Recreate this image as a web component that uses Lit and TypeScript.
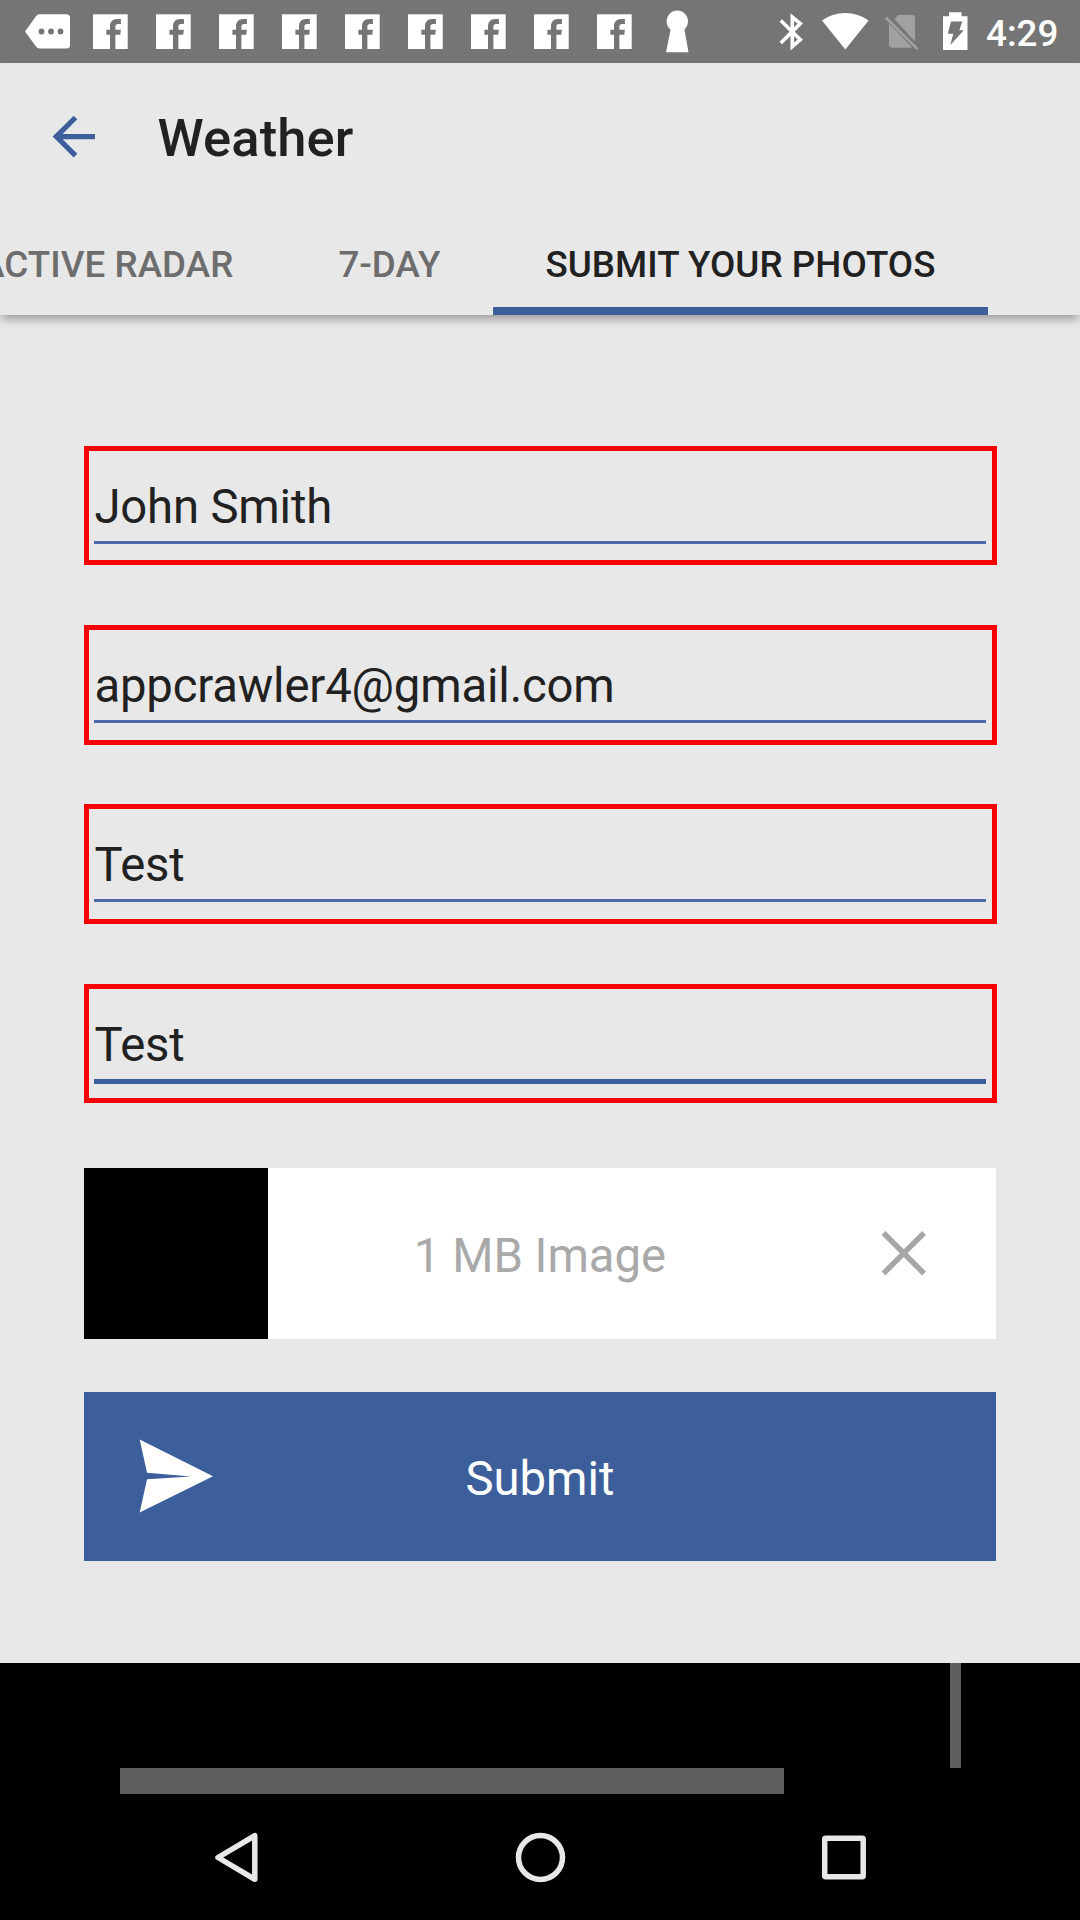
import { LitElement, html, css } from "lit";
import { customElement, property } from "lit/decorators.js";
import { classMap } from "lit/directives/class-map.js";

@customElement("status-bar")
class StatusBar extends LitElement {
  static styles = css`
    :host {
      display: flex;
      height: 63px;
      padding-left: 16px;
      background: #757575;
      color: #fff;
      overflow: hidden;
    }
    svg {
      display: block;
      flex: none;
      height: 63px;
    }
    .slot {
      width: 63px;
    }
    .bluetooth {
      width: 42px;
      margin-left: auto;
    }
    .wifi {
      width: 66px;
    }
    .sim {
      width: 52px;
    }
    .battery {
      width: 50px;
    }
    .clock {
      flex: none;
      box-sizing: border-box;
      width: 100px;
      padding: 4px 0 0 6px;
      font-size: 36.75px;
      font-weight: 500;
      line-height: 60px;
      white-space: nowrap;
    }
  `;

  private facebook() {
    return html`<svg class="slot" viewBox="79 0 63 63">
      <rect x="93" y="14.3" width="34.7" height="34.7" fill="#fff" />
      <path
        fill="#757575"
        d="M110 49V34.8h-3.6v-5H110v-3.3c0-4.8 2.8-7.5 7.2-7.5h3.7v5h-2.7c-2 0-2.8 1-2.8 2.8v3h5.5l-.7 5h-4.8V49z"
      />
    </svg>`;
  }

  render() {
    return html`
      <svg class="slot" viewBox="16 0 63 63">
        <path
          fill="#fff"
          d="M39.5 14.3H66.5q3.5 0 3.5 3.5V45q0 3.5-3.5 3.5H39.5q-2.3 0-3.5-2L25 31.4 36 16.3q1.2-2 3.5-2z"
        />
        <g fill="#757575">
          <circle cx="41.5" cy="31.5" r="2.9" />
          <circle cx="51" cy="31.5" r="2.9" />
          <circle cx="60.5" cy="31.5" r="2.9" />
        </g>
      </svg>
      ${Array.from({ length: 9 }, () => this.facebook())}
      <svg class="slot" viewBox="646 0 63 63">
        <circle cx="677.3" cy="21.3" r="10.7" fill="#fff" />
        <path fill="#fff" d="M669.5 27 670.5 30 666 52.200h22.500L684.500 30l1-3z" />
      </svg>
      <svg class="bluetooth" viewBox="770 0 42 63">
        <path
          fill="none"
          stroke="#fff"
          stroke-width="3.6"
          d="M780.8 20.5 800.3 39.6 792.3 46.500V17L800.3 23.6 780.8 43"
        />
      </svg>
      <svg class="wifi" viewBox="812 0 66 63">
        <path fill="#fff" d="M845.3 49.5 822 20.5q10-7.500 23.300-7.500t23.300 7.500z" />
      </svg>
      <svg class="sim" viewBox="878 0 52 63">
        <g fill="#a1a1a1">
          <path d="M898.5 14.7H911.5q3.5 0 3.5 3.5V41.5L894.3 19z" />
          <path d="M889 23.3 912.5 47.8H892.5q-3.5 0-3.5-3.5z" />
        </g>
        <path stroke="#a1a1a1" stroke-width="2.6" d="M885.8 17.5 917.5 49.2" />
      </svg>
      <svg class="battery" viewBox="930 0 50 63">
        <path fill="#fff" d="M949 12.3h12.5v4H967.500v33.700H943V16.300h6z" />
        <path fill="#757575" d="M951 21.5h11.300l-3 8.800h4.500L950.300 45l3-11.300h-5.500z" />
      </svg>
      <div class="clock">4:29</div>
    `;
  }
}

@customElement("form-field")
class FormField extends LitElement {
  static styles = css`
    :host {
      display: block;
    }
    .box {
      box-sizing: border-box;
      height: 119.4px;
      border: 5px solid #f40404;
      padding: 30px 6px 0 5.4px;
    }
    .value {
      font-size: 47.25px;
      letter-spacing: -0.16px;
      line-height: 52px;
      color: #212121;
      white-space: nowrap;
    }
    .rule {
      height: 3px;
      margin-top: 8px;
      background: #4a69a5;
    }
    .rule.focused {
      height: 5px;
      background: #3c5f9c;
    }
  `;
  @property() value = "";
  @property({ type: Boolean }) focused = false;

  render() {
    return html`<div class="box">
      <div class="value">${this.value}</div>
      <div class=${classMap({ rule: true, focused: this.focused })}></div>
    </div>`;
  }
}

@customElement("app-root")
class AppRoot extends LitElement {
  static styles = css`
    :host {
      display: flex;
      flex-direction: column;
      width: 1080px;
      height: 1920px;
      background: #000;
      font-family: Roboto, "Liberation Sans", sans-serif;
      overflow: hidden;
    }
    svg {
      display: block;
      flex: none;
    }
    .screen {
      height: 1600px;
      background: #e8e8e8;
    }
    .header {
      height: 252px;
      background: #e8e8e8;
      box-shadow: 0 6px 9px -2px rgba(0, 0, 0, 0.34);
    }
    .toolbar {
      display: flex;
      align-items: center;
      height: 147px;
      padding-left: 42px;
    }
    .title {
      margin: 3px 0 0 51.5px;
      font-size: 52.5px;
      font-weight: 500;
      letter-spacing: 0.12px;
      line-height: 62px;
      color: #212121;
    }
    .tabs {
      display: flex;
      justify-content: flex-end;
      height: 105px;
      padding-right: 92px;
      overflow: hidden;
    }
    .tab {
      flex: none;
      box-sizing: border-box;
      height: 105px;
      padding: 4px 52.5px 0;
      border-bottom: 8px solid transparent;
      font-size: 36.75px;
      font-weight: 500;
      letter-spacing: 0.05px;
      line-height: 101px;
      color: #6d6d6d;
      white-space: nowrap;
    }
    .tab.active {
      color: #212121;
      border-color: #3c5f9c;
    }
    .form {
      display: flex;
      flex-direction: column;
      padding: 130.9px 84px 0;
    }
    .fields {
      display: flex;
      flex-direction: column;
      gap: 59.85px;
      width: 913px;
    }
    .attachment {
      display: grid;
      grid-template-columns: 184px 1fr 184px;
      grid-template-rows: 171px;
      height: 171px;
      margin-top: 65.4px;
      background: #fff;
    }
    .thumb {
      background: #000;
    }
    .label {
      box-sizing: border-box;
      padding-top: 3px;
      font-size: 47.25px;
      line-height: 171px;
      text-align: center;
      color: #a9a9a9;
    }
    .remove {
      align-self: center;
      justify-self: center;
    }
    .submit {
      display: grid;
      grid-template-columns: 184px 1fr 184px;
      align-items: center;
      height: 169px;
      margin-top: 52.6px;
      background: #3c5f9c;
      color: #fff;
    }
    .send {
      justify-self: center;
    }
    .caption {
      padding-top: 6px;
      font-size: 47.25px;
      line-height: 60px;
      text-align: center;
    }
    .under {
      display: flex;
      flex-direction: column;
      height: 131px;
    }
    .vbar {
      width: 11px;
      height: 105px;
      margin-left: 949.5px;
      background: #5e5e5e;
    }
    .hbar {
      width: 664px;
      height: 26px;
      margin-left: 120px;
      background: #5e5e5e;
    }
    .nav {
      display: flex;
      justify-content: center;
      height: 126px;
    }
  `;

  private tabs = ["INTERACTIVE RADAR", "7-DAY", "SUBMIT YOUR PHOTOS"];
  private values = ["John Smith", "appcrawler4@gmail.com", "Test", "Test"];

  render() {
    const lastTab = this.tabs.length - 1;
    const lastField = this.values.length - 1;
    return html`
      <status-bar></status-bar>
      <div class="screen">
        <div class="header">
          <div class="toolbar">
            <svg width="64" height="63" viewBox="42 105 64 63">
              <path
                fill="none"
                stroke="#3c5f9c"
                stroke-width="5.2"
                d="M95 136.6H57M75.500 117.500 56.300 136.600 75.500 155.700"
              />
            </svg>
            <div class="title">Weather</div>
          </div>
          <div class="tabs">
            ${this.tabs.map(
              (t, i) => html`<div class=${classMap({ tab: true, active: i === lastTab })}>${t}</div>`
            )}
          </div>
        </div>
        <div class="form">
          <div class="fields">
            ${this.values.map(
              (v, i) => html`<form-field .value=${v} ?focused=${i === lastField}></form-field>`
            )}
          </div>
          <div class="attachment">
            <div class="thumb"></div>
            <div class="label">1 MB Image</div>
            <svg class="remove" width="50" height="50" viewBox="879 1229.500 50 50">
              <path
                stroke="#a6a6a6"
                stroke-width="5.400"
                d="M883.500 1233.500 924 1274M924 1233.500 883.500 1274"
              />
            </svg>
          </div>
          <div class="submit">
            <svg class="send" width="80" height="80" viewBox="136 1436.500 80 80">
              <path fill="#fff" d="M139.700 1440 213 1476.800 139.700 1513 147 1479.800 191 1477 147 1473.200z" />
            </svg>
            <div class="caption">Submit</div>
          </div>
        </div>
      </div>
      <div class="under">
        <div class="vbar"></div>
        <div class="hbar"></div>
      </div>
      <div class="nav">
        <svg width="720" height="126" viewBox="180 1794 720 126">
          <g fill="none" stroke="#e8e8e8" stroke-width="5.500" stroke-linejoin="round">
            <path d="M218 1857.500 254.800 1835.700V1879.300z" />
            <circle cx="540.500" cy="1857.500" r="22" />
            <rect x="824.700" y="1838.300" width="38.500" height="38.500" rx="1" />
          </g>
        </svg>
      </div>
    `;
  }
}
